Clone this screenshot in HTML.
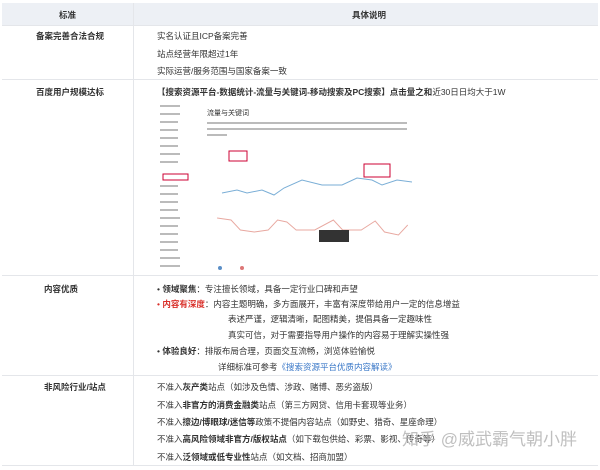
<!DOCTYPE html>
<html><head><meta charset="utf-8"><style>
*{margin:0;padding:0;box-sizing:border-box}
body{width:600px;height:470px;background:#fff;font-family:"Liberation Sans","Noto Sans CJK SC",sans-serif;font-size:8.5px;color:#333;position:relative;overflow:hidden}
.a{position:absolute;white-space:nowrap}
.b{font-weight:bold}
.hl{position:absolute;left:2px;width:596px;height:1px;background:#e4e6ea}
.r{color:#d9302a;font-weight:bold}
</style></head><body>
<div class="a" style="left:2px;top:3px;width:596px;height:22px;background:#edf0f5"></div>
<div class="a" style="left:133px;top:3px;width:1px;height:462px;background:#e4e6ea"></div>
<div class="hl" style="top:25px"></div><div class="hl" style="top:79px"></div><div class="hl" style="top:275px"></div><div class="hl" style="top:375px"></div><div class="hl" style="top:465px"></div>
<div class="a b" style="left:59px;top:9px">标准</div>
<div class="a b" style="left:352px;top:9px">具体说明</div>
<div class="a b" style="left:36px;top:30px">备案完善合法合规</div>
<div class="a" style="left:157px;top:30px">实名认证且ICP备案完善</div>
<div class="a" style="left:157px;top:48px">站点经营年限超过1年</div>
<div class="a" style="left:157px;top:65px">实际运营/服务范围与国家备案一致</div>
<div class="a b" style="left:36px;top:86px">百度用户规模达标</div>
<div class="a" style="left:157px;top:86px"><b>【搜索资源平台-数据统计-流量与关键词-移动搜索及PC搜索】点击量之和</b>近30日日均大于1W</div>
<svg class="a" style="left:152px;top:100px" width="260" height="175" viewBox="0 0 260 175">
<g fill="#bbb"><rect x="8" y="5" width="20" height="2"/><rect x="8" y="13" width="20" height="2"/><rect x="8" y="21" width="18" height="2"/><rect x="8" y="29" width="18" height="2"/><rect x="8" y="37" width="18" height="2"/><rect x="8" y="45" width="18" height="2"/><rect x="8" y="53" width="20" height="2"/><rect x="8" y="61" width="18" height="2"/><rect x="8" y="85" width="18" height="2"/><rect x="8" y="93" width="18" height="2"/><rect x="8" y="101" width="18" height="2"/><rect x="8" y="109" width="18" height="2"/><rect x="8" y="117" width="20" height="2"/><rect x="8" y="125" width="18" height="2"/><rect x="8" y="133" width="18" height="2"/><rect x="8" y="141" width="18" height="2"/><rect x="8" y="149" width="18" height="2"/><rect x="8" y="157" width="20" height="2"/><rect x="8" y="165" width="20" height="2"/>
<rect x="55" y="22" width="200" height="2"/><rect x="55" y="28" width="200" height="2"/><rect x="55" y="34" width="20" height="2"/></g>
<text x="55" y="15" font-size="7" fill="#333">流量与关键词</text>
<rect x="11" y="74" width="25" height="6" fill="none" stroke="#c03" stroke-width="1"/>
<rect x="77" y="51" width="18" height="10" fill="none" stroke="#c03" stroke-width="1"/>
<rect x="212" y="64" width="26" height="13" fill="none" stroke="#c03" stroke-width="1"/>
<path d="M70 93L85 90L95 93L110 90L122 95L132 88L150 80L170 85L190 85L205 78L220 80L230 85L245 80L260 82" fill="none" stroke="#7aaed6" stroke-width="1"/>
<path d="M70 118L85 120L95 130L110 132L125 130L135 120L145 122L155 130L175 130L195 120L205 130L225 130L240 121L250 132L265 135L275 125" fill="none" stroke="#e8a8a0" stroke-width="1" transform="scale(0.93,1)"/>
<rect x="167" y="130" width="30" height="12" fill="#333"/>
<circle cx="68" cy="168" r="2" fill="#5b8fc7"/><circle cx="90" cy="168" r="2" fill="#d77"/>
</svg>
<div class="a b" style="left:44px;top:283px">内容优质</div>
<div class="a" style="left:157px;top:283px">• <b>领域聚焦</b>：专注擅长领域，具备一定行业口碑和声望</div>
<div class="a" style="left:157px;top:298px"><span style="color:#d9302a">•</span> <span class="r">内容有深度</span>：内容主题明确，多方面展开，丰富有深度带给用户一定的信息增益</div>
<div class="a" style="left:228px;top:313px">表述严谨，逻辑清晰，配图精美，提倡具备一定趣味性</div>
<div class="a" style="left:228px;top:329px">真实可信，对于需要指导用户操作的内容易于理解实操性强</div>
<div class="a" style="left:157px;top:345px">• <b>体验良好</b>：排版布局合理，页面交互流畅，浏览体验愉悦</div>
<div class="a" style="left:218px;top:361px">详细标准可参考<span style="color:#3a78c8">《搜索资源平台优质内容解读》</span></div>
<div class="a b" style="left:44px;top:381px">非风险行业/站点</div>
<div class="a" style="left:157px;top:381px">不准入<b>灰产类</b>站点（如涉及色情、涉政、赌博、恶劣盗版）</div>
<div class="a" style="left:157px;top:399px">不准入<b>非官方的消费金融类</b>站点（第三方网贷、信用卡套现等业务）</div>
<div class="a" style="left:157px;top:416px">不准入<b>擦边/博眼球/迷信等</b>政策不提倡内容站点（如野史、猎奇、星座命理）</div>
<div class="a" style="left:157px;top:433px">不准入<b>高风险领域非官方/版权站点</b>（如下载包供给、彩票、影视、传奇等）</div>
<div class="a" style="left:157px;top:451px">不准入<b>泛领域或低专业性</b>站点（如文档、招商加盟）</div>
<div class="a" style="left:402px;top:425px;font-size:17px;color:rgba(180,180,180,0.85)">知乎 @威武霸气朝小胖</div>
</body></html>
